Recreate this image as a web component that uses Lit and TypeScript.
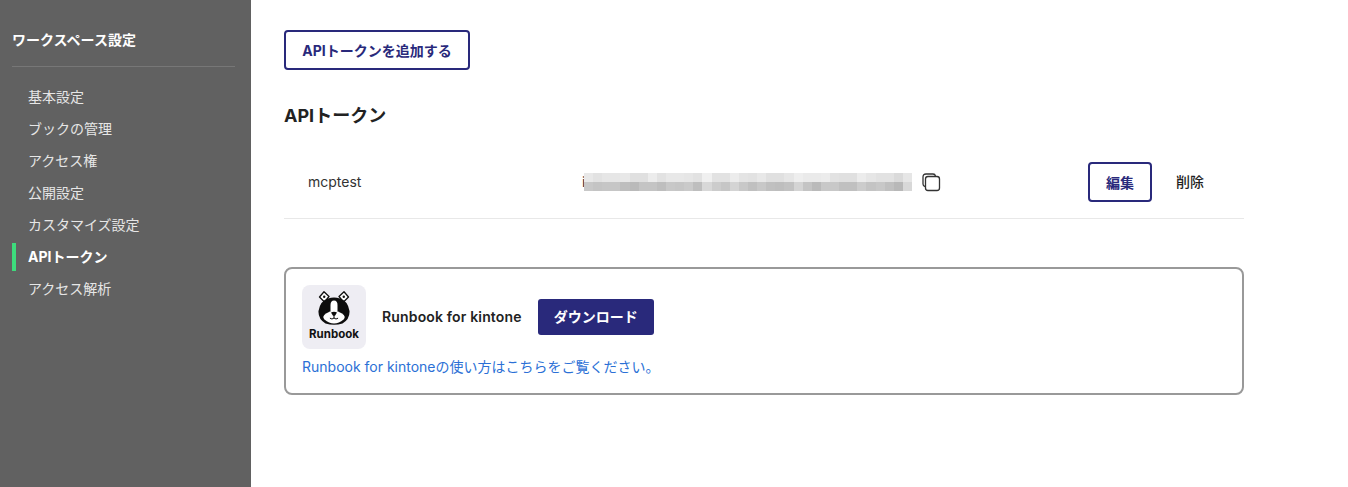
import { LitElement, html, css, svg } from 'lit';
import { customElement } from 'lit/decorators.js';

const NAV = ['基本設定', 'ブックの管理', 'アクセス権', '公開設定', 'カスタマイズ設定', 'APIトークン', 'アクセス解析'];

// the token is masked in the reference: two rows of blurred cells
const TOP = [232, 226, 230, 230, 232, 224, 224, 236, 226, 232, 232, 230, 226, 240, 226, 226, 236, 228, 226, 232, 224, 224, 230, 238, 234, 234, 236, 226, 224, 224, 236, 230, 226, 226, 218, 230];
const BOTTOM = [200, 196, 198, 198, 190, 186, 196, 196, 190, 200, 198, 202, 190, 216, 204, 198, 212, 200, 192, 200, 192, 190, 194, 212, 196, 186, 200, 200, 192, 192, 204, 196, 200, 192, 184, 216];

const dogLogo = svg`
  <svg class="dog" viewBox="0 0 34 34" width="34" height="34" aria-hidden="true">
    <path d="M7 0.8 L12 5.5 L7.5 11 L2.5 6 Z" fill="#fff" stroke="#111" stroke-width="1.3" stroke-linejoin="round" />
    <path d="M27 0.8 L22 5.5 L26.5 11 L31.5 6 Z" fill="#fff" stroke="#111" stroke-width="1.3" stroke-linejoin="round" />
    <circle cx="7.2" cy="5.8" r="1.2" fill="#111" />
    <circle cx="26.8" cy="5.8" r="1.2" fill="#111" />
    <path d="M11 7.5 Q17 5.5 23 7.5 Q31 10 32.5 20 Q33 28 25.5 32.5 Q17 35 8.5 32.5 Q1 28 1.5 20 Q3 10 11 7.5 Z" fill="#0d0d0d" />
    <path d="M17 9.5 Q20.5 9.5 20.5 14 L20.5 20 L13.5 20 L13.5 14 Q13.5 9.5 17 9.5 Z" fill="#fff" />
    <path d="M17 19 Q21 20 25 22.5 Q29.5 25.5 26.5 28.5 Q22 32.5 17 32.5 Q12 32.5 7.5 28.5 Q4.5 25.5 9 22.5 Q13 20 17 19 Z" fill="#fff" />
    <path d="M14 21.5 Q17 20.2 20 21.5 L18.2 24.6 Q17 25.3 15.8 24.6 Z" fill="#0d0d0d" />
    <path d="M17 24.6 V27 M13.2 27.4 Q15 29 17 27 Q19 29 20.8 27.4" fill="none" stroke="#0d0d0d" stroke-width="1" stroke-linecap="round" />
  </svg>
`;

@customElement('app-root')
export class AppRoot extends LitElement {
  static styles = css`
    :host {
      display: flex;
      height: 487px;
      overflow: hidden;
      background: #fff;
      color: #222;
      font-family: Inter, 'Noto Sans CJK JP', sans-serif;
      font-size: 14px;
    }
    .side {
      width: 251px;
      flex: none;
      box-sizing: border-box;
      padding: 0 16px 0 12px;
      background: #616161;
    }
    .side-title {
      height: 67px;
      box-sizing: border-box;
      padding-top: 30px;
      border-bottom: 1px solid #777;
      color: #fff;
      font-size: 14px;
      font-weight: 700;
      line-height: 20px;
    }
    .nav {
      display: flex;
      flex-direction: column;
      gap: 4px;
      margin-top: 16px;
    }
    .nav-item {
      height: 28px;
      padding-left: 16px;
      line-height: 27px;
      font-size: 14px;
      color: #e6e6e6;
      box-sizing: border-box;
    }
    .nav-item.active {
      border-left: 4px solid #3ddc7c;
      padding-left: 12px;
      color: #fff;
      font-weight: 700;
    }
    .main {
      flex: 1;
      padding: 30px 104px 0 33px;
    }
    .btn {
      display: inline-flex;
      align-items: center;
      justify-content: center;
      box-sizing: border-box;
      border: 2px solid #29297b;
      border-radius: 4px;
      background: #fff;
      color: #29297b;
      font: inherit;
      font-size: 14px;
      font-weight: 700;
    }
    .add {
      width: 186px;
      height: 40px;
      padding-bottom: 2px;
    }
    h2 {
      margin: 34px 0 0;
      font-size: 18px;
      font-weight: 700;
      line-height: 24px;
      color: #222;
    }
    .row {
      display: flex;
      align-items: center;
      height: 72px;
      margin-top: 18px;
      border-bottom: 1px solid #e8e8e8;
    }
    .name {
      width: 275px;
      padding: 0 0 2px 24px;
      font-size: 14px;
      color: #333;
    }
    .token {
      display: flex;
      align-items: center;
      width: 505px;
    }
    .i {
      width: 2px;
      margin-left: -1px;
      padding-bottom: 2px;
      font-size: 14px;
      color: #333;
    }
    .mosaic {
      display: grid;
      grid-template-columns: repeat(36, 1fr);
      grid-auto-rows: 9px;
      width: 328px;
      margin-right: 9px;
      margin-bottom: 1px;
    }
    .copy {
      margin-bottom: 1px;
    }
    .edit {
      width: 64px;
      height: 40px;
      padding-bottom: 2px;
    }
    .delete {
      margin-left: 24px;
      padding-bottom: 2px;
      font-size: 14px;
      font-weight: 500;
      color: #222;
    }
    .card {
      margin-top: 48px;
      height: 128px;
      box-sizing: border-box;
      padding: 16px;
      border: 2px solid #999;
      border-radius: 8px;
    }
    .card-head {
      display: flex;
      align-items: center;
    }
    .logo {
      display: flex;
      flex-direction: column;
      align-items: center;
      width: 64px;
      height: 64px;
      flex: none;
      box-sizing: border-box;
      padding-top: 6px;
      border-radius: 8px;
      background: #eeedf3;
    }
    .dog {
      display: block;
    }
    .logo-text {
      font-size: 11.5px;
      font-weight: 700;
      line-height: 15px;
      color: #111;
      margin-top: 2px;
    }
    .card-title {
      margin-left: 16px;
      padding-bottom: 2px;
      font-size: 14px;
      font-weight: 600;
      letter-spacing: 0.16px;
      color: #222;
    }
    .download {
      display: inline-flex;
      align-items: center;
      justify-content: center;
      width: 116px;
      height: 36px;
      margin-left: 16px;
      padding-bottom: 2px;
      box-sizing: border-box;
      border-radius: 3px;
      background: #29297b;
      color: #fff;
      font-size: 14px;
      font-weight: 700;
    }
    .link {
      display: block;
      margin-top: 9px;
      font-size: 14px;
      line-height: 18px;
      color: #2b70d6;
      text-decoration: none;
    }
  `;

  private _cells(values: number[]) {
    return values.map((v) => html`<span style="background:rgb(${v},${v},${v})"></span>`);
  }

  render() {
    return html`
      <aside class="side">
        <div class="side-title">ワークスペース設定</div>
        <nav class="nav">
          ${NAV.map(
            (item) => html`<div class="nav-item ${item === 'APIトークン' ? 'active' : ''}">${item}</div>`
          )}
        </nav>
      </aside>
      <main class="main">
        <button class="btn add">APIトークンを追加する</button>
        <h2>APIトークン</h2>
        <div class="row">
          <div class="name">mcptest</div>
          <div class="token">
            <span class="i">i</span>
            <div class="mosaic">${this._cells(TOP)}${this._cells(BOTTOM)}</div>
            <svg class="copy" width="20" height="20" viewBox="0 0 20 20" fill="none" stroke="#333" stroke-width="1.3">
              <path d="M4 14.5 Q2 14 2 12 V5 Q2 2 5 2 H12 Q14 2 14.5 4" />
              <rect x="4.5" y="4.5" width="14" height="14" rx="2.5" />
            </svg>
          </div>
          <button class="btn edit">編集</button>
          <span class="delete">削除</span>
        </div>
        <section class="card">
          <div class="card-head">
            <div class="logo">
              ${dogLogo}
              <span class="logo-text">Runbook</span>
            </div>
            <span class="card-title">Runbook for kintone</span>
            <span class="download">ダウンロード</span>
          </div>
          <a class="link" href="#">Runbook for kintoneの使い方はこちらをご覧ください。</a>
        </section>
      </main>
    `;
  }
}
